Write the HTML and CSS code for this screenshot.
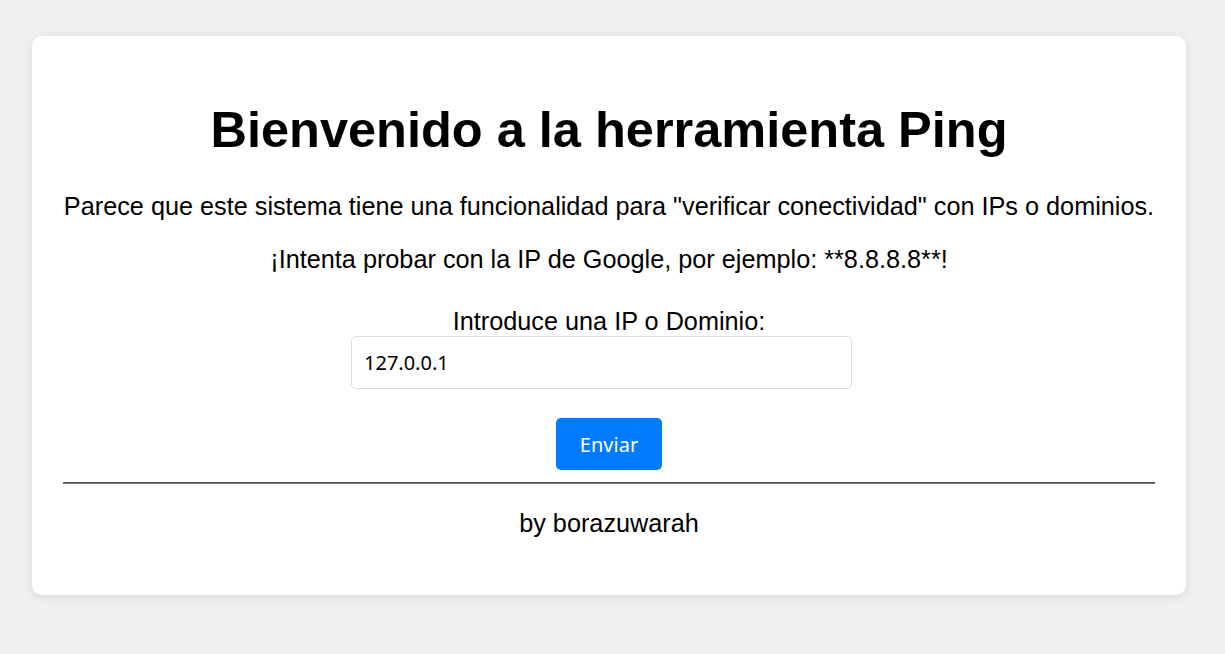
FILE: index.html
```html
<!DOCTYPE html>
<html lang="es">
<head>
<meta charset="utf-8">
<title>Herramienta Ping</title>
<link rel="stylesheet" href="styles.css">
</head>
<body>
<main class="card">
  <h1 class="title">Bienvenido a la herramienta Ping</h1>
  <p class="text">Parece que este sistema tiene una funcionalidad para "verificar conectividad" con IPs o dominios.</p>
  <p class="text">¡Intenta probar con la IP de Google, por ejemplo: **8.8.8.8**!</p>
  <form class="ping-form">
    <label class="label" for="ip">Introduce una IP o Dominio:</label>
    <input class="field" id="ip" type="text" value="127.0.0.1">
    <button class="btn" type="submit">Enviar</button>
  </form>
  <hr class="rule">
  <p class="text footer">by borazuwarah</p>
</main>
</body>
</html>
```
FILE: styles.css
```css
html, body {
  margin: 0;
  background: #f0f0f0;
}
body {
  padding: 36px 39px 36px 32px;
  font-family: "Liberation Sans", Arial, sans-serif;
  color: #000;
}
.card {
  background: #fff;
  border-radius: 10px;
  box-shadow: 0 2px 10px rgba(0, 0, 0, 0.1);
  padding: 30px 31px;
  text-align: center;
}
.title {
  font-size: 50.5px;
  font-weight: bold;
  line-height: 58px;
  margin: 35px 0 33px;
}
.text {
  font-size: 25.25px;
  line-height: 29px;
  margin: 0 0 24px;
}
.ping-form {
  display: flex;
  flex-direction: column;
  align-items: center;
  padding-top: 9px;
}
.label {
  font-size: 25.25px;
  line-height: 29px;
}
.field {
  box-sizing: border-box;
  width: 501px;
  height: 53px;
  margin: 0 15px 0 0;
  padding: 0 12px;
  border: 1px solid #dcdcdc;
  border-radius: 5px;
  font-family: "Noto Sans", sans-serif;
  font-size: 20px;
  color: #000;
  background: #fff;
}
.btn {
  box-sizing: border-box;
  height: 52px;
  margin-top: 29px;
  padding: 0 24px;
  border: none;
  border-radius: 5px;
  background: #007bff;
  color: #fff;
  font-family: "Noto Sans", sans-serif;
  font-size: 20px;
}
.rule {
  margin: 12px 0 0;
  height: 0;
  border: none;
  border-top: 1px solid #555;
  border-bottom: 1px solid #777;
}
.footer {
  margin: 25px 0 27px;
}
```
